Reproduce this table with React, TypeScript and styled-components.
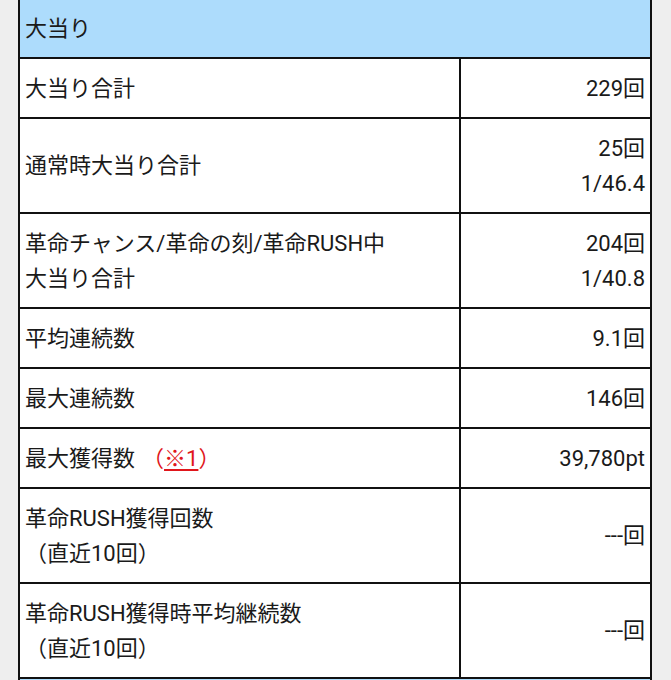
import React from "react";
import styled, { createGlobalStyle } from "styled-components";

const GlobalStyle = createGlobalStyle`
  html, body {
    margin: 0;
    padding: 0;
    background: #eeeeee;
  }
  body {
    font-family: Roboto, "Noto Sans CJK JP", sans-serif;
    color: #1a1a1a;
  }
`;

const Page = styled.div`
  padding: 0 19px 0 18px;
  margin-top: -3px;
`;

const Table = styled.table`
  width: 100%;
  border-collapse: collapse;
  table-layout: fixed;
  background: #ffffff;
  font-size: 22px;
  line-height: 35px;
`;

const HeadCell = styled.th<{ $open?: boolean }>`
  background: #addcfc;
  border: 2px solid #111;
  border-top: ${({ $open }) => ($open ? "none" : "2px solid #111")};
  padding: 11.5px 5px;
  text-align: left;
  font-weight: 400;
`;

const Cell = styled.td<{ $value?: boolean }>`
  border: 2px solid #111;
  padding: 11.5px 5px;
  text-align: ${({ $value }) => ($value ? "right" : "left")};
  vertical-align: middle;
  white-space: nowrap;
`;

const Note = styled.span`
  color: #e0161b;
  margin-left: 7px;
`;

const NoteLink = styled.span`
  text-decoration: underline;
  text-underline-offset: 3px;
`;

const LabelCol = styled.col`
  width: auto;
`;

const ValueCol = styled.col`
  width: 191px;
`;

type Row = {
  label: React.ReactNode;
  value: React.ReactNode;
};

const rows: Row[] = [
  { label: "大当り合計", value: "229回" },
  {
    label: "通常時大当り合計",
    value: (
      <>
        25回
        <br />
        1/46.4
      </>
    ),
  },
  {
    label: (
      <>
        革命チャンス/革命の刻/革命RUSH中
        <br />
        大当り合計
      </>
    ),
    value: (
      <>
        204回
        <br />
        1/40.8
      </>
    ),
  },
  { label: "平均連続数", value: "9.1回" },
  { label: "最大連続数", value: "146回" },
  {
    label: (
      <>
        最大獲得数
        <Note>
          （<NoteLink>※1</NoteLink>）
        </Note>
      </>
    ),
    value: "39,780pt",
  },
  {
    label: (
      <>
        革命RUSH獲得回数
        <br />
        （直近10回）
      </>
    ),
    value: "---回",
  },
  {
    label: (
      <>
        革命RUSH獲得時平均継続数
        <br />
        （直近10回）
      </>
    ),
    value: "---回",
  },
];

const App = () => {
  return (
    <>
      <GlobalStyle />
      <Page>
        <Table>
          <colgroup>
            <LabelCol />
            <ValueCol />
          </colgroup>
          <thead>
            <tr>
              <HeadCell colSpan={2}>大当り</HeadCell>
            </tr>
          </thead>
          <tbody>
            {rows.map((row, i) => (
              <tr key={i}>
                <Cell>{row.label}</Cell>
                <Cell $value>{row.value}</Cell>
              </tr>
            ))}
          </tbody>
        </Table>
        <Table>
          <thead>
            <tr>
              <HeadCell $open>&nbsp;</HeadCell>
            </tr>
          </thead>
        </Table>
      </Page>
    </>
  );
};

export default App;
